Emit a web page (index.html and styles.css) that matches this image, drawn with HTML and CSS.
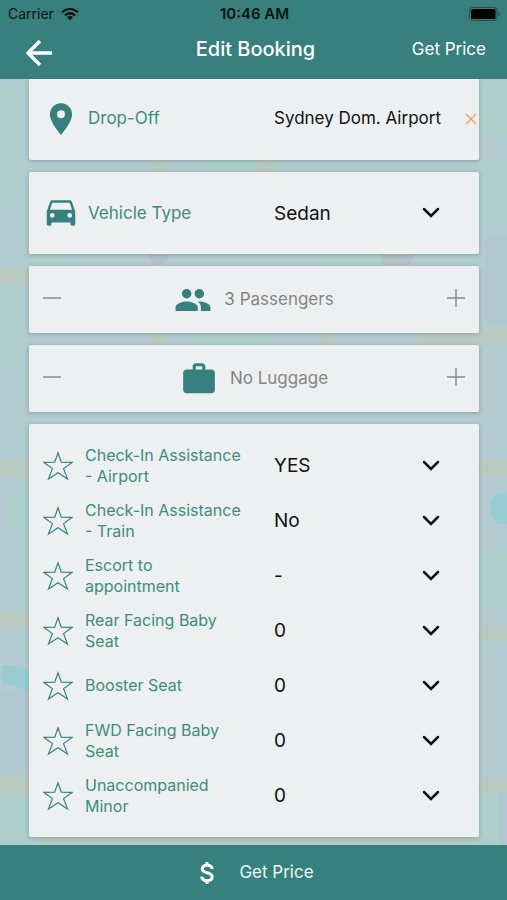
FILE: index.html
```html
<!DOCTYPE html>
<html lang="en">
<head>
<meta charset="utf-8">
<meta name="viewport" content="width=device-width, initial-scale=1">
<title>Edit Booking</title>
<link rel="stylesheet" href="styles.css">
</head>
<body>
<svg class="defs" aria-hidden="true">
  <symbol id="chevron" viewBox="0 0 18 12"><path d="M2 2l7 7 7-7" fill="none" stroke="currentColor" stroke-width="2.5" stroke-linecap="round"/></symbol>
  <symbol id="star" viewBox="0 0 30 30"><path d="M15 1.800l3.300 9.400 11 .1-8.700 6.300 3.900 10.300-9.500-6.100-9.500 6.100 3.900-10.300L.7 11.300l11-.1z" fill="none" stroke="currentColor" stroke-width="1.2"/></symbol>
  <symbol id="minus" viewBox="0 0 20 20"><path d="M1 10h18" stroke="currentColor" stroke-width="1.4"/></symbol>
  <symbol id="plus" viewBox="0 0 20 20"><path d="M1 10h18M10 1v18" stroke="currentColor" stroke-width="1.4"/></symbol>
</svg>

<svg class="map" viewBox="0 0 507 900" preserveAspectRatio="none" aria-hidden="true">
  <path fill="#b1cbd1" d="M0 0h507v900H0z"/>
  <path fill="#adcecb" d="M0 90h17v113H0zM0 285h17v84H0zM9 495h20v34H9zM30 250h38v20H30zM479 79h28v55h-28zM479 160h28v65h-28zM320 255h60v10h-60zM190 334h80v12h-80zM479 552h28v50h-28zM0 796h29v50H0zM479 792h20v60h-20zM200 160h80v12h-80z"/>
  <path fill="#b1c7d0" d="M485 237h22v85h-22zM0 690h29v85H0zM499 792h8v60h-8z"/>
  <path fill="#b8c9bf" d="M0 269h29v16H0zM0 460h29v17H0zM0 612h29v17H0zM0 776h29v18H0zM479 328h28v16h-28zM479 460h28v16h-28zM479 625h28v16h-28zM479 777h28v15h-28zM420 334h60v12h-60zM150 160h16v12h-16zM150 334h16v12h-16zM258 160h16v12h-16zM315 334h18v12h-18zM40 838h439v5H40z"/>
  <path fill="#b5bfc4" d="M149 254h20c0 6-4 11-10 11s-10-5-10-11zM380 254h34l-4 11h-26z"/>
  <path fill="#98ccd2" d="M2 665c11 0 20 2 27 7v21c-9-6-18-8-27-9zM507 493h-6c-6 0-11 6-11 15s5 16 11 16h6z"/>
</svg>

<header class="top">
  <div class="status">
    <span class="carrier">Carrier
      <svg width="18" height="14" viewBox="0 0 18 14"><g fill="none" stroke="#071412" stroke-width="2.3"><path d="M1 5.2q8-6.6 16 0"/><path d="M4 8.3q5-4 10 0"/></g><path fill="#071412" d="M6 10.2q3-2.4 6 0L9 13.2z"/></svg>
    </span>
    <time class="clock">10:46 AM</time>
    <svg class="battery" width="32" height="14" viewBox="0 0 32 14"><rect x=".5" y=".5" width="27.500" height="13" rx="3" fill="none" stroke="#214f4c"/><rect x="2" y="2" width="24.500" height="10" rx="1.500"/><path d="M29.500 4.500q3 2.500 0 5z" fill="#214f4c"/></svg>
  </div>
  <nav class="nav">
    <button class="plain back" type="button" aria-label="Back"><svg width="28" height="28" viewBox="0 0 28 28"><path d="M27 14H3M15 2L3 14l12 12" fill="none" stroke="currentColor" stroke-width="3.400"/></svg></button>
    <h1>Edit Booking</h1>
    <button class="plain price" type="button">Get Price</button>
  </nav>
</header>

<main>
  <section class="card dropoff">
    <svg class="icon" width="38" height="38" viewBox="0 0 24 24"><path d="M12 2C8.100 2 5 5.100 5 9c0 5.200 7 13 7 13s7-7.800 7-13c0-3.900-3.100-7-7-7zm0 9.500a2.500 2.500 0 1 1 0-5 2.500 2.500 0 0 1 0 5z"/></svg>
    <label for="dropoff">Drop-Off</label>
    <input id="dropoff" type="text" value="Sydney Dom. Airport">
    <button class="plain clear" type="button" aria-label="Clear drop-off"><svg width="12" height="12" viewBox="0 0 12 12"><path d="M1 1l10 10M11 1L1 11" stroke="currentColor" stroke-width="1.200"/></svg></button>
  </section>

  <section class="card vehicle">
    <svg class="icon" width="38" height="38" viewBox="0 0 24 24"><path d="M18.900 5c-.2-.6-.7-1-1.400-1h-11c-.7 0-1.200.4-1.400 1L3 11v8c0 .6.400 1 1 1h1c.6 0 1-.4 1-1v-1h12v1c0 .6.400 1 1 1h1c.6 0 1-.4 1-1v-8zM6.500 15a1.500 1.500 0 1 1 0-3 1.500 1.500 0 0 1 0 3zm11 0a1.500 1.500 0 1 1 0-3 1.500 1.500 0 0 1 0 3zM5 10l1.500-4.500h11L19 10z"/></svg>
    <label for="vehicle">Vehicle Type</label>
    <div class="pick"><select id="vehicle"><option>Sedan</option></select><svg class="chev"><use href="#chevron"/></svg></div>
  </section>

  <section class="card stepper">
    <button class="plain" type="button" aria-label="Fewer passengers"><svg width="20" height="20"><use href="#minus"/></svg></button>
    <div class="count"><svg class="icon" width="38" height="38" viewBox="0 0 24 24"><path d="M16 11a3 3 0 1 0 0-6 3 3 0 0 0 0 6zm-8 0a3 3 0 1 0 0-6 3 3 0 0 0 0 6zm0 2c-2.300 0-7 1.200-7 3.500V19h14v-2.500C15 14.200 10.300 13 8 13zm8 0c-.3 0-.6 0-1 .05 1.200.85 2 2 2 3.450V19h6v-2.500c0-2.300-4.700-3.500-7-3.500z"/></svg><output>3 Passengers</output></div>
    <button class="plain" type="button" aria-label="More passengers"><svg width="20" height="20"><use href="#plus"/></svg></button>
  </section>

  <section class="card stepper">
    <button class="plain" type="button" aria-label="Less luggage"><svg width="20" height="20"><use href="#minus"/></svg></button>
    <div class="count"><svg class="icon" width="38" height="38" viewBox="0 0 24 24"><path fill-rule="evenodd" d="M20 6h-4V4c0-1.100-.9-2-2-2h-4c-1.100 0-2 .9-2 2v2H4c-1.100 0-2 .9-2 2v11c0 1.100.9 2 2 2h16c1.100 0 2-.9 2-2V8c0-1.100-.9-2-2-2zm-6 0h-4V4h4z"/></svg><output>No Luggage</output></div>
    <button class="plain" type="button" aria-label="More luggage"><svg width="20" height="20"><use href="#plus"/></svg></button>
  </section>

  <section class="card extras">
    <div class="row"><svg class="star"><use href="#star"/></svg><label for="e1">Check-In Assistance - Airport</label><div class="pick"><select id="e1"><option>YES</option></select><svg class="chev"><use href="#chevron"/></svg></div></div>
    <div class="row"><svg class="star"><use href="#star"/></svg><label for="e2">Check-In Assistance - Train</label><div class="pick"><select id="e2"><option>No</option></select><svg class="chev"><use href="#chevron"/></svg></div></div>
    <div class="row"><svg class="star"><use href="#star"/></svg><label for="e3">Escort to appointment</label><div class="pick"><select id="e3"><option>-</option></select><svg class="chev"><use href="#chevron"/></svg></div></div>
    <div class="row"><svg class="star"><use href="#star"/></svg><label for="e4">Rear Facing Baby Seat</label><div class="pick"><select id="e4"><option>0</option></select><svg class="chev"><use href="#chevron"/></svg></div></div>
    <div class="row"><svg class="star"><use href="#star"/></svg><label for="e5">Booster Seat</label><div class="pick"><select id="e5"><option>0</option></select><svg class="chev"><use href="#chevron"/></svg></div></div>
    <div class="row"><svg class="star"><use href="#star"/></svg><label for="e6">FWD Facing Baby Seat</label><div class="pick"><select id="e6"><option>0</option></select><svg class="chev"><use href="#chevron"/></svg></div></div>
    <div class="row"><svg class="star"><use href="#star"/></svg><label for="e7">Unaccompanied Minor</label><div class="pick"><select id="e7"><option>0</option></select><svg class="chev"><use href="#chevron"/></svg></div></div>
  </section>
</main>

<button class="plain bottom" type="button">
  <svg width="16" height="24" viewBox="0 0 16 24"><path d="M13.200 8c-.3-2.400-2-3.700-5.100-3.700-3 0-4.900 1.400-4.900 3.700 0 5 10 2.600 10 7.800 0 2.500-2 3.900-5.100 3.900-3.300 0-5.200-1.500-5.400-4.100M8 1v4M8 19v4" fill="none" stroke="currentColor" stroke-width="3"/></svg>
  Get Price
</button>
</body>
</html>
```
FILE: styles.css
```css
* {
  box-sizing: border-box;
}

body {
  position: relative;
  display: flex;
  flex-direction: column;
  min-height: 100vh;
  margin: 0;
  color: #111;
  background: #b1cbd1;
  font: 17px/21px Inter, "Liberation Sans", sans-serif;
}

svg {
  display: block;
  flex: none;
}

.defs {
  position: absolute;
  width: 0;
  height: 0;
}

.map {
  position: absolute;
  inset: 0;
  z-index: -1;
  width: 100%;
  height: 100%;
}

.plain {
  display: flex;
  align-items: center;
  padding: 0;
  border: 0;
  background: none;
  color: inherit;
  font: inherit;
}

/* Header */
.top {
  height: 79px;
  background: #37807d;
  color: #fff;
}

.status {
  display: grid;
  grid-template-columns: 1fr auto 1fr;
  align-items: center;
  height: 27px;
  padding: 0 6px 0 8px;
  color: #071412;
  font-size: 14px;
}

.carrier {
  display: flex;
  gap: 7px;
  align-items: center;
}

.clock {
  font-size: 15px;
  font-weight: 600;
}

.battery {
  justify-self: end;
}

.nav {
  display: grid;
  grid-template-columns: 1fr auto 1fr;
  align-items: center;
  height: 44px;
  padding: 0 21px 0 25px;
}

.nav h1 {
  margin: 0;
  font-size: 20px;
  font-weight: 500;
}

.back {
  padding-top: 8px;
}

.price {
  justify-self: end;
}

/* Cards */
main {
  display: flex;
  flex: 1;
  flex-direction: column;
  gap: 12px;
  padding: 0 28px 8px 29px;
}

.card {
  border-radius: 2px;
  background: #edf0f1;
  box-shadow: 0 1px 4px rgba(60, 80, 85, 0.35);
}

.icon {
  fill: #37807d;
}

label {
  color: #418b7f;
  font-size: 16px;
}

.dropoff,
.vehicle {
  display: grid;
  grid-template-columns: 38px 178px 1fr auto;
  column-gap: 8px;
  align-items: center;
  height: 82px;
  padding-left: 13px;
}

.dropoff label,
.vehicle label {
  font-size: 17px;
}

.dropoff {
  height: 81px;
  padding-right: 2px;
  padding-bottom: 2px;
  border-radius: 0 0 2px 2px;
}

input {
  width: 100%;
  min-width: 0;
  padding: 0;
  border: 0;
  background: none;
  color: #111;
  font: inherit;
}

.clear {
  color: #f19a5b;
}

.pick {
  position: relative;
  display: flex;
  align-items: center;
  width: 166px;
}

select {
  width: 100%;
  height: 32px;
  padding: 0;
  border: 0;
  appearance: none;
  background: none;
  color: #111;
  font: inherit;
  font-size: 19px;
}

.chev {
  position: absolute;
  right: 0;
  width: 18px;
  height: 12px;
  pointer-events: none;
}

.stepper {
  display: flex;
  align-items: center;
  justify-content: space-between;
  height: 67px;
  padding: 0 13px;
  color: #858585;
}

.stepper button {
  padding-bottom: 3px;
}

.count {
  display: flex;
  gap: 12px;
  align-items: center;
}

/* Extras */
.extras {
  padding: 14px 0 14px 14px;
}

.row {
  display: grid;
  grid-template-columns: 30px 177px 1fr;
  column-gap: 12px;
  align-items: center;
  height: 55px;
}

.row label {
  padding-right: 14px;
}

.star {
  width: 30px;
  height: 30px;
  color: #37807d;
}

/* Footer */
.bottom {
  justify-content: center;
  gap: 24px;
  height: 55px;
  padding-left: 6px;
  background: #37807d;
  color: #e9f7f6;
}

.bottom svg {
  color: #fff;
}
```
